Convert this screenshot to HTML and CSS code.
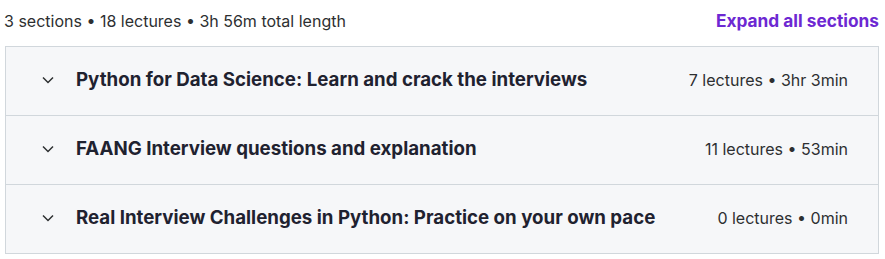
FILE: index.html
```html
<!DOCTYPE html>
<html lang="en">
    <head>
        <title>Course content</title>
        <link rel="stylesheet" href="styles.css">
    </head>
    <body>
        <div id="curriculum">
            <div class="curriculumHeader">
                <span class="summaryText">3 sections • 18 lectures • 3h 56m total length</span>
                <button class="expandButton">Expand all sections</button>
            </div>

            <div class="sectionList">
                <div class="sectionRow">
                    <svg class="chevron" viewBox="0 0 12 8"><path d="M1 1.5l5 5 5-5"/></svg>
                    <span class="sectionTitle">Python for Data Science: Learn and crack the interviews</span>
                    <span class="sectionMeta">7 lectures • 3hr 3min</span>
                </div>

                <div class="sectionRow">
                    <svg class="chevron" viewBox="0 0 12 8"><path d="M1 1.5l5 5 5-5"/></svg>
                    <span class="sectionTitle">FAANG Interview questions and explanation</span>
                    <span class="sectionMeta">11 lectures • 53min</span>
                </div>

                <div class="sectionRow">
                    <svg class="chevron" viewBox="0 0 12 8"><path d="M1 1.5l5 5 5-5"/></svg>
                    <span class="sectionTitle">Real Interview Challenges in Python: Practice on your own pace</span>
                    <span class="sectionMeta">0 lectures • 0min</span>
                </div>
            </div>
        </div>
    </body>
</html>
```

FILE: styles.css
```css
body{
    margin: 0;
    background-color: #ffffff;
    font-family: 'Inter', 'Noto Sans', sans-serif;
    color: #2d2f31;
}

#curriculum{
    padding: 0 6px 0 5px;
}

.curriculumHeader{
    display: flex;
    justify-content: space-between;
    align-items: center;
    height: 46px;
    padding-bottom: 5px;
    box-sizing: border-box;
}

.summaryText{
    font-size: 16px;
    margin-left: -1px;
}

.expandButton{
    border: none;
    background: none;
    padding: 0;
    font-family: inherit;
    font-size: 17.3px;
    font-weight: 700;
    color: #6d28d2;
    cursor: pointer;
}

.sectionList{
    border: 1px solid #d1d7dc;
}

.sectionRow{
    display: flex;
    align-items: center;
    height: 65px;
    padding: 0 30px 3px 36px;
    background-color: #f6f7f9;
    border-top: 1px solid #d1d7dc;
}

.sectionRow:first-child{
    border-top: none;
}

.chevron{
    width: 12px;
    height: 8px;
    fill: none;
    stroke: #2d2f31;
    stroke-width: 1.5;
    margin-right: 22px;
}

.sectionTitle{
    flex: 1;
    font-size: 18.7px;
    font-weight: 700;
    color: #1f2230;
}

.sectionMeta{
    font-size: 16px;
}
```
